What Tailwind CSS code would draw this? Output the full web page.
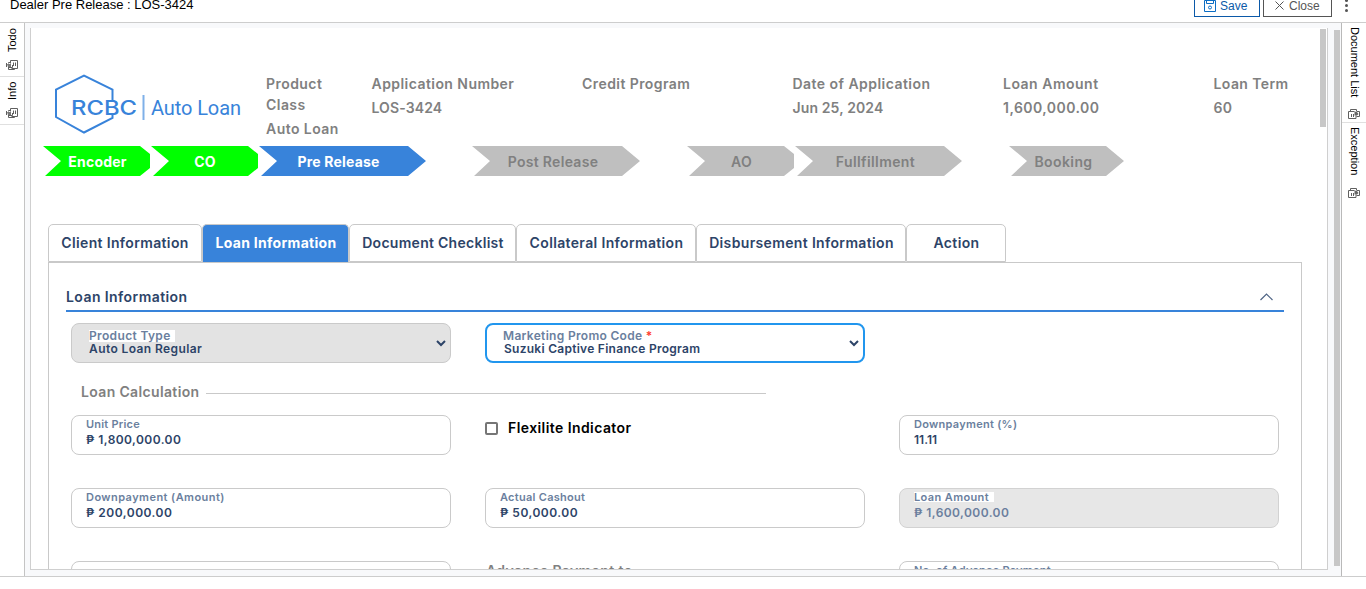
<!DOCTYPE html>
<html lang="en">
<head>
<meta charset="utf-8">
<title>Dealer Pre Release</title>
<script src="https://cdn.jsdelivr.net/npm/@tailwindcss/browser@4"></script>
</head>
<body class="w-[1366px] h-[589px] overflow-hidden bg-white font-['Inter',sans-serif] flex flex-col">
<svg class="hidden">
  <symbol id="panel" viewBox="0 0 12 10"><path d="M4.500 3.500v-3h7v8h-6M7.500 2.500v3.500M9.500 2.500v3.500M4 2.500H2.500v1M.5 3v4M2.500 7.500v2h6v-1M2 7.500h4.500V5" fill="none" stroke="#606060"/><path d="M1 4h4v3H2z" fill="#777"/></symbol>
  <symbol id="doc" viewBox="0 0 12 10"><path d="M6.500 2.500h-6v7h7.500v-3M3.500 5v3M5.500 5v3M2.500 2v-1.500h6v2M9 2.500h2.500v5h-3" fill="none" stroke="#606060"/><path d="M6.500 2.500L9 3l1.500 2-1.500 1.500H6.500z" fill="#666"/></symbol>
  <symbol id="caret" viewBox="0 0 10 7"><path d="M1 1l4 4 4-4" fill="none" stroke="#2d4468" stroke-width="2"/></symbol>
</svg>

<header class="h-[23px] shrink-0 border-b border-[#cdcdcd] flex overflow-hidden font-['Liberation_Sans',sans-serif]">
  <h1 class="ml-[10px] -mt-[3px] h-4 leading-4 text-[13px] grow">Dealer Pre Release : LOS-3424</h1>
  <button class="-mt-[6px] w-[66px] h-[23px] border border-[#0b59a8] text-[#0b59a8] text-[12px] flex items-center pl-[9px]">
    <svg class="w-3 h-3 mr-[4px]" viewBox="0 0 12 12" fill="none" stroke="#0b6dc4"><path d="M.5 .5h11v11H.5zM2.500 .5v3h7V.5"/><circle cx="6" cy="7.500" r="1.500"/></svg>
    <span>Save</span></button>
  <button class="-mt-[6px] ml-[3px] w-[69px] h-[23px] border border-[#555] text-[#555] text-[12px] flex items-center pl-[11px]">
    <svg class="w-[9px] h-[9px] mr-[5px]" viewBox="0 0 9 9" stroke="#555"><path d="M.5 .5l8 8M8.500 .5l-8 8"/></svg>
    <span>Close</span></button>
  <div class="ml-[13px] mr-[18px] flex flex-col gap-[2px]"><i class="size-[3px] bg-[#555] rounded-full -mt-px"></i><i class="size-[3px] bg-[#555] rounded-full"></i><i class="size-[3px] bg-[#555] rounded-full"></i></div>
</header>

<div class="h-[554px] shrink-0 flex border-b border-[#cdcdcd]">
  <aside class="w-[25px] shrink-0 border-r border-[#c4c4c4] font-['Liberation_Sans',sans-serif] text-[11px] leading-[14px]">
    <div class="h-[54px] border-b border-[#e0e0e0] flex flex-col items-center">
      <span class="mt-[3px] -ml-px h-[26px] [writing-mode:vertical-rl] rotate-180">Todo</span><svg class="mt-[8px] w-3 h-[10px]"><use href="#panel"/></svg></div>
    <div class="h-[48px] border-b border-[#e0e0e0] flex flex-col items-center">
      <span class="mt-[3px] -ml-px h-[20px] [writing-mode:vertical-rl] rotate-180">Info</span><svg class="mt-[8px] w-3 h-[10px]"><use href="#panel"/></svg></div>
  </aside>

  <main class="w-[1316px] shrink-0 bg-[#f8f9fb] flex pt-[5px] pl-[5px]">
    <section class="w-[1298px] h-[542px] bg-white border-x border-b border-[#cfcfcf] flex overflow-hidden">
      <div class="w-[1289px] shrink-0">
        <div class="h-[118px] flex text-[#808080] text-[14px] font-semibold leading-[21px]">
          <svg class="ml-[23px] mt-[46px] w-[190px] h-[60px] mr-[22px] shrink-0" viewBox="0 0 190 60" fill="none">
            <path d="M58.500 26V15.500L30 1.500 2 15.500V43L30 58.500 58.500 44V41" stroke="#3883da" stroke-width="2"/>
            <text x="17" y="41" textLength="66" lengthAdjust="spacingAndGlyphs" fill="#3883da" font-family="Inter" font-weight="500" font-size="20">RCBC</text>
            <path d="M89.500 21v25" stroke="#7fb0e8" stroke-width="2"/>
            <text x="97" y="41" textLength="90" fill="#3883da" font-family="Roboto" font-weight="400" font-size="20">Auto Loan</text>
          </svg>
          <dl class="w-[105.5px] shrink-0 pt-[45px] tracking-[.45px]"><dt class="w-16">Product Class</dt><dd class="mt-[3px] whitespace-nowrap">Auto Loan</dd></dl>
          <dl class="w-[210.5px] shrink-0 pt-[45px]"><dt class="tracking-[.44px]">Application Number</dt><dd class="mt-[3px] tracking-[.1px]">LOS-3424</dd></dl>
          <dl class="w-[210.5px] shrink-0 pt-[45px]"><dt class="tracking-[.43px]">Credit Program</dt></dl>
          <dl class="w-[210.5px] shrink-0 pt-[45px]"><dt class="tracking-[.46px]">Date of Application</dt><dd class="mt-[3px] tracking-[.12px]">Jun 25, 2024</dd></dl>
          <dl class="w-[210.5px] shrink-0 pt-[45px]"><dt class="tracking-[.5px]">Loan Amount</dt><dd class="mt-[3px] tracking-[.46px]">1,600,000.00</dd></dl>
          <dl class="shrink-0 pt-[45px] tracking-[.4px]"><dt>Loan Term</dt><dd class="mt-[3px]">60</dd></dl>
        </div>
        <ol class="h-[30px] ml-[12px] flex text-[14px] font-bold leading-[32px] text-center tracking-[.2px]">
          <li class="w-[107px] mr-px pl-[2px] bg-[#00ff00] text-white [clip-path:polygon(0_0,97px_0,107px_8px,107px_22px,97px_100%,2px_100%,18px_50%)]">Encoder</li>
          <li class="w-[107px] mr-px pl-px bg-[#00ff00] text-white [clip-path:polygon(0_0,97px_0,107px_8px,107px_22px,97px_100%,2px_100%,18px_50%)]">CO</li>
          <li class="w-[167px] mr-[46px] pr-[8px] bg-[#3883da] text-white [clip-path:polygon(0_0,149px_0,167px_50%,149px_100%,2px_100%,18px_50%)]">Pre Release</li>
          <li class="w-[168px] mr-[47px] pr-[6px] bg-[#bfbfbf] text-[#808080] font-semibold tracking-[.3px] [clip-path:polygon(0_0,150px_0,168px_50%,150px_100%,2px_100%,18px_50%)]">Post Release</li>
          <li class="w-[107px] mr-px pl-[2px] bg-[#bfbfbf] text-[#808080] font-semibold [clip-path:polygon(0_0,97px_0,107px_8px,107px_22px,97px_100%,2px_100%,18px_50%)]">AO</li>
          <li class="w-[167px] mr-[47px] pr-[6px] bg-[#bfbfbf] text-[#808080] font-semibold tracking-[.4px] [clip-path:polygon(0_0,149px_0,167px_50%,149px_100%,2px_100%,18px_50%)]">Fullfillment</li>
          <li class="w-[115px] pr-[6px] bg-[#bfbfbf] text-[#808080] font-semibold tracking-[.4px] [clip-path:polygon(0_0,97px_0,115px_50%,97px_100%,2px_100%,18px_50%)]">Booking</li>
        </ol>
        <nav class="mt-[48px] ml-[17px] h-[38px] flex text-[14px] font-semibold text-[#2d4468] text-center leading-[36px] tracking-[.35px]">
          <a class="w-[154px] border border-[#c9c9c9] rounded-t-[5px]">Client Information</a>
          <a class="w-[147px] pl-px border border-b-0 border-[#c9c9c9] rounded-t-[5px] bg-[#3883da] text-white font-bold tracking-[.3px]">Loan Information</a>
          <a class="w-[167px] pl-px border border-[#c9c9c9] rounded-t-[5px] tracking-[.28px]">Document Checklist</a>
          <a class="w-[180px] pl-px border border-[#c9c9c9] rounded-t-[5px]">Collateral Information</a>
          <a class="w-[210px] pl-px border border-[#c9c9c9] rounded-t-[5px]">Disbursement Information</a>
          <a class="w-[100px] pl-px border border-[#c9c9c9] rounded-t-[5px]">Action</a>
        </nav>
        <div class="ml-[17px] w-[1254px] h-[340px] border border-[#c9c9c9] pl-[17px] text-[#2d4468] font-semibold">
          <div class="w-[1218px] h-[49px] border-b-2 border-[#3883da] flex justify-between items-center pt-[20px] pr-[11px]">
            <h2 class="text-[14px] tracking-[.42px]">Loan Information</h2>
            <svg class="w-[13px] h-[8px]" viewBox="0 0 13 8" fill="none" stroke="#4f6485" stroke-width="1.200"><path d="M.5 7l6-6 6 6"/></svg>
          </div>
          <div class="ml-[5px] mt-[11px] flex gap-[34px] text-[12px] leading-[13px]">
            <div class="relative w-[380px] h-[40px] rounded-[8px] border border-[#cacaca] bg-[#e3e3e3] pl-[17px] pt-[5px]">
              <div class="h-[13px]"><span class="mt-px bg-white text-[#6b7f9e] inline-block h-[12px] leading-[11px] w-[86px] whitespace-nowrap tracking-[.35px]">Product Type</span></div><div class="tracking-[.4px]">Auto Loan Regular</div>
              <svg class="absolute right-[4px] top-[16px] w-[10px] h-[7px]"><use href="#caret"/></svg></div>
            <div class="relative w-[380px] h-[40px] rounded-[8px] border-2 border-[#2196ee] pl-[16px] pt-[4px]">
              <div class="text-[#6b7f9e] tracking-[.31px]">Marketing Promo Code <span class="text-[#ff3b30]">*</span></div><div class="pl-px tracking-[.27px]">Suzuki Captive Finance Program</div>
              <svg class="absolute right-[4px] top-[15px] w-[10px] h-[7px]"><use href="#caret"/></svg></div>
          </div>
          <div class="ml-[15px] mt-[18px] h-[22px] flex items-start text-[14px] leading-[21px] text-[#808080]"><span class="w-[125px] tracking-[.35px]">Loan Calculation</span><hr class="w-[560px] border-[#c9c9c9] mt-[12px]"></div>
          <div class="ml-[5px] mt-[12px] grid grid-cols-[380px_380px_380px] gap-x-[34px] gap-y-[33px] text-[12px] tracking-[.42px]">
            <div class="h-[40px] rounded-[8px] border border-[#cacaca] pl-[14px] pt-[2px]"><div class="text-[11px] leading-[13px] text-[#6b7f9e] tracking-[.22px]">Unit Price</div><div class="leading-[17px]">₱ 1,800,000.00</div></div>
            <label class="flex h-[26px] items-center text-[14px] text-black"><i class="size-[13px] border-2 border-[#767676] rounded-[2px] mr-[10px]"></i><span class="-mt-[2px]">Flexilite Indicator</span></label>
            <div class="h-[40px] rounded-[8px] border border-[#cacaca] pl-[14px] pt-[2px]"><div class="text-[11px] leading-[13px] text-[#6b7f9e] tracking-[.28px]">Downpayment (%)</div><div class="leading-[17px] tracking-normal">11.11</div></div>
            <div class="h-[40px] rounded-[8px] border border-[#cacaca] pl-[14px] pt-[2px]"><div class="text-[11px] leading-[13px] text-[#6b7f9e] tracking-[.44px]">Downpayment (Amount)</div><div class="leading-[17px] tracking-[.48px]">₱ 200,000.00</div></div>
            <div class="h-[40px] rounded-[8px] border border-[#cacaca] pl-[14px] pt-[2px]"><div class="text-[11px] leading-[13px] text-[#6b7f9e] tracking-[.28px]">Actual Cashout</div><div class="leading-[17px] tracking-[.48px]">₱ 50,000.00</div></div>
            <div class="h-[40px] rounded-[8px] border border-[#d2d2d2] bg-[#e7e7e7] pl-[14px] pt-[3px]"><div class="w-[80px] h-[10px] bg-white text-[11px] leading-[11px] text-[#6b7f9e] tracking-[.38px]">Loan Amount</div><div class="mt-[2px] leading-[17px] text-[#6b7f9e]">₱ 1,600,000.00</div></div>
            <div class="h-[40px] rounded-[8px] border border-[#cacaca]"></div>
            <div class="pl-px text-[14px] leading-[19px] text-[#808080] tracking-[.38px]">Advance Payment to</div>
            <div class="h-[40px] rounded-[8px] border border-[#cacaca] pl-[14px] pt-[2px]"><div class="text-[11px] leading-[13px] text-[#6b7f9e] tracking-[.25px]">No. of Advance Payment</div></div>
          </div>
        </div>
      </div>
      <div class="mt-px h-[98px] w-[6px] bg-[#c7c7c7]"></div>
    </section>
    <div class="ml-[6px] mt-[2px] w-[6px] h-[536px] bg-[#c7c7c7]"></div>
  </main>

  <aside class="w-[25px] shrink-0 border-l border-[#b9b9b9] font-['Liberation_Sans',sans-serif] text-[11px] leading-[14px]">
    <div class="h-[100px] border-b border-[#e0e0e0] flex flex-col items-center"><span class="mt-[4px] ml-px h-[72px] [writing-mode:vertical-rl]">Document List</span><svg class="mt-[10px] w-3 h-[10px]"><use href="#doc"/></svg></div>
    <div class="flex flex-col items-center"><span class="mt-[4px] ml-px h-[50px] [writing-mode:vertical-rl]">Exception</span><svg class="mt-[11px] w-3 h-[10px]"><use href="#doc"/></svg></div>
  </aside>
</div>
</body>
</html>
